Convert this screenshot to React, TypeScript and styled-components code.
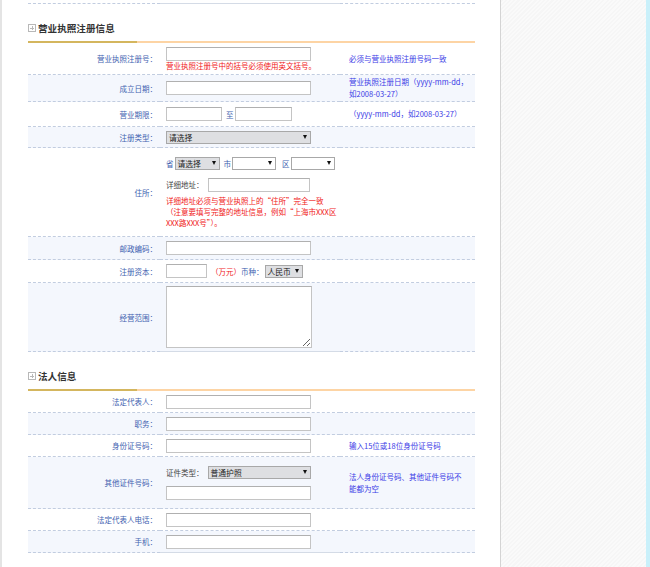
import React from "react";
import styled, { createGlobalStyle } from "styled-components";

const GlobalStyle = createGlobalStyle`
  html, body {
    margin: 0;
    padding: 0;
    height: 100%;
    overflow: hidden;
  }
  body {
    font-family: "Noto Sans CJK SC", "DejaVu Sans", sans-serif;
    font-size: 7.5px;
  }
  * {
    box-sizing: border-box;
  }
`;

type RowDef = {
  label: string;
  h: number;
  field: React.ReactNode;
  note?: React.ReactNode;
  last?: boolean;
};

const Select = ({ text, width, blank }: { text?: string; width: number; blank?: boolean }) => (
  <SelectBox $width={width} $blank={blank}>
    <span>{text}</span>
    <Arrow />
  </SelectBox>
);

const licenceRows = (): RowDef[] => [
  {
    label: "营业执照注册号：",
    h: 32,
    field: (
      <>
        <TextInput $width={145} />
        <RedText>营业执照注册号中的括号必须使用英文括号。</RedText>
      </>
    ),
    note: "必须与营业执照注册号码一致",
  },
  {
    label: "成立日期：",
    h: 27,
    field: <TextInput $width={145} />,
    note: (
      <>
        营业执照注册日期（yyyy-mm-dd，
        <br />
        如2008-03-27）
      </>
    ),
  },
  {
    label: "营业期限：",
    h: 25,
    field: (
      <Inline>
        <TextInput $width={56} />
        <Plain>至</Plain>
        <TextInput $width={57} />
      </Inline>
    ),
    note: "（yyyy-mm-dd，如2008-03-27）",
  },
  {
    label: "注册类型：",
    h: 21,
    field: <Select text="请选择" width={145} />,
  },
  {
    label: "住所：",
    h: 89,
    field: (
      <>
        <Inline>
          <Plain>省</Plain>
          <Select text="请选择" width={45} />
          <Plain $gap={4}>市</Plain>
          <Select width={44} blank />
          <Plain $gap={6}>区</Plain>
          <Select width={44} blank />
        </Inline>
        <Inline $top={8}>
          <Dark>详细地址：</Dark>
          <TextInput $width={102} />
        </Inline>
        <RedText $lines>
          详细地址必须与营业执照上的“住所”完全一致
          <br />
          （注意要填写完整的地址信息，例如“上海市XXX区
          <br />
          XXX路XXX号”）。
        </RedText>
      </>
    ),
  },
  {
    label: "邮政编码：",
    h: 23,
    field: <TextInput $width={145} />,
  },
  {
    label: "注册资本：",
    h: 23,
    field: (
      <Inline>
        <TextInput $width={41} />
        <RedSpan>（万元）</RedSpan>
        <Plain $gap={0}>币种：</Plain>
        <Select text="人民币" width={38} />
      </Inline>
    ),
  },
  {
    label: "经营范围：",
    h: 69,
    field: <Area />,
    last: true,
  },
];

const personRows = (): RowDef[] => [
  { label: "法定代表人：", h: 22, field: <TextInput $width={145} /> },
  { label: "职务：", h: 22, field: <TextInput $width={145} /> },
  {
    label: "身份证号码：",
    h: 22,
    field: <TextInput $width={145} />,
    note: "输入15位或18位身份证号码",
  },
  {
    label: "其他证件号码：",
    h: 52,
    field: (
      <>
        <Inline>
          <Dark>证件类型：</Dark>
          <Select text="普通护照" width={103} />
        </Inline>
        <Inline $top={7}>
          <TextInput $width={145} />
        </Inline>
      </>
    ),
    note: (
      <>
        法人身份证号码、其他证件号码不
        <br />
        能都为空
      </>
    ),
  },
  { label: "法定代表人电话：", h: 22, field: <TextInput $width={145} /> },
  { label: "手机：", h: 22, field: <TextInput $width={145} />, last: true },
];

const Section = ({ title, rows }: { title: string; rows: RowDef[] }) => (
  <>
    <SectionHead>
      <PlusBox />
      <HeadText>{title}</HeadText>
    </SectionHead>
    <HeadLine />
    {rows.map((row, i) => (
      <Row key={row.label} $h={row.h} $alt={i % 2 === 1}>
        <Label>{row.label}</Label>
        <Field $last={row.last}>{row.field}</Field>
        <Note>{row.note}</Note>
      </Row>
    ))}
  </>
);

const App = () => {
  return (
    <Page>
      <GlobalStyle />
      <Main>
        <Row $h={4} $alt={false}>
          <Label />
          <Field $last />
          <Note />
        </Row>
        <Section title="营业执照注册信息" rows={licenceRows()} />
        <Section title="法人信息" rows={personRows()} />
      </Main>
      <Side />
      <Edge />
    </Page>
  );
};

/** Page Styles */
const Page = styled.div`
  display: flex;
  height: 100vh;
  width: 100vw;
`;

const Main = styled.div`
  width: 500px;
  flex-shrink: 0;
  height: 100%;
  background: #fff;
  border-left: 2px solid #e4e4e4;
  padding: 0 25px 0 26px;
`;

const Side = styled.div`
  flex: 1;
  height: 100%;
  border-left: 1px solid #d4d4d4;
  background: repeating-linear-gradient(
    135deg,
    #f6f6f6 0px,
    #f6f6f6 1.5px,
    #fafafa 1.5px,
    #fafafa 3px
  );
`;

const Edge = styled.div`
  width: 4px;
  height: 100%;
  background: #c9f0fa;
`;

/** Section header */
const SectionHead = styled.div`
  height: 37px;
  display: flex;
  align-items: flex-end;
  padding-bottom: 7px;
`;

const PlusBox = styled.span`
  position: relative;
  width: 8px;
  height: 8px;
  border: 1px solid #b8b8b8;
  margin: 0 2px 2px 0;
  &::before,
  &::after {
    content: "";
    position: absolute;
    background: #b8b8b8;
  }
  &::before {
    left: 1px;
    right: 1px;
    top: 2.5px;
    height: 1px;
  }
  &::after {
    top: 1px;
    bottom: 1px;
    left: 2.5px;
    width: 1px;
  }
`;

const HeadText = styled.span`
  font-size: 9.6px;
  font-weight: bold;
  color: #333;
  line-height: 12px;
`;

const HeadLine = styled.div`
  height: 2px;
  background: linear-gradient(to right, #d4b65e 0, #d4b65e 109px, #fdd4a4 109px);
`;

/** Rows */
const Row = styled.div<{ $h: number; $alt: boolean }>`
  display: grid;
  grid-template-columns: 132px 180px 1fr;
  height: ${(p) => p.$h}px;
  background: ${(p) => (p.$alt ? "#f4f7fd" : "#fff")};
`;

const Cell = styled.div`
  border-bottom: 1px dashed #c2cde0;
  display: flex;
  align-items: center;
  line-height: 11px;
`;

const Label = styled(Cell)`
  justify-content: flex-end;
  padding-right: 3px;
  color: #4262b0;
  white-space: nowrap;
`;

const Field = styled(Cell)<{ $last?: boolean }>`
  flex-direction: column;
  align-items: flex-start;
  justify-content: center;
  padding-left: 6px;
  ${(p) => (p.$last ? "border-bottom: 1px solid #d4dbe6;" : "")}
`;

const Note = styled(Cell)`
  padding-left: 9px;
  color: #3b3be6;
  line-height: 12px;
  white-space: nowrap;
`;

const Inline = styled.div<{ $top?: number }>`
  display: flex;
  align-items: center;
  margin-top: ${(p) => p.$top ?? 0}px;
`;

const TextInput = styled.input.attrs({ type: "text" })<{ $width: number }>`
  width: ${(p) => p.$width}px;
  height: 14px;
  border: 1px solid #c4c4c4;
  border-top-color: #b0b0b0;
  background: #fff;
  padding: 0;
  margin: 0;
  outline: none;
`;

const Area = styled.textarea`
  width: 146px;
  height: 62px;
  border: 1px solid #c4c4c4;
  border-top-color: #b0b0b0;
  margin: 0;
  padding: 0;
  resize: both;
  outline: none;
`;

const SelectBox = styled.div<{ $width: number; $blank?: boolean }>`
  width: ${(p) => p.$width}px;
  height: 13px;
  display: flex;
  align-items: center;
  justify-content: space-between;
  padding: 0 3px 0 2px;
  border: 1px solid #a8a8a8;
  background: ${(p) => (p.$blank ? "#fff" : "#dedfe2")};
  color: #222;
  font-size: 7.8px;
`;

const Arrow = styled.span`
  width: 0;
  height: 0;
  border-left: 2.5px solid transparent;
  border-right: 2.5px solid transparent;
  border-top: 4px solid #111;
`;

const Plain = styled.span<{ $gap?: number }>`
  color: #4262b0;
  margin: 0 1px 0 ${(p) => p.$gap ?? 4}px;
  &:first-child {
    margin-left: 0;
  }
`;

const Dark = styled.span`
  color: #444;
  margin-right: 4px;
`;

const RedText = styled.div<{ $lines?: boolean }>`
  color: #f01818;
  margin-top: ${(p) => (p.$lines ? 3 : 0)}px;
  line-height: ${(p) => (p.$lines ? 11 : 9)}px;
  white-space: nowrap;
`;

const RedSpan = styled.span`
  color: #f01818;
  margin-left: 4px;
`;

/** Exports */
export default App;
